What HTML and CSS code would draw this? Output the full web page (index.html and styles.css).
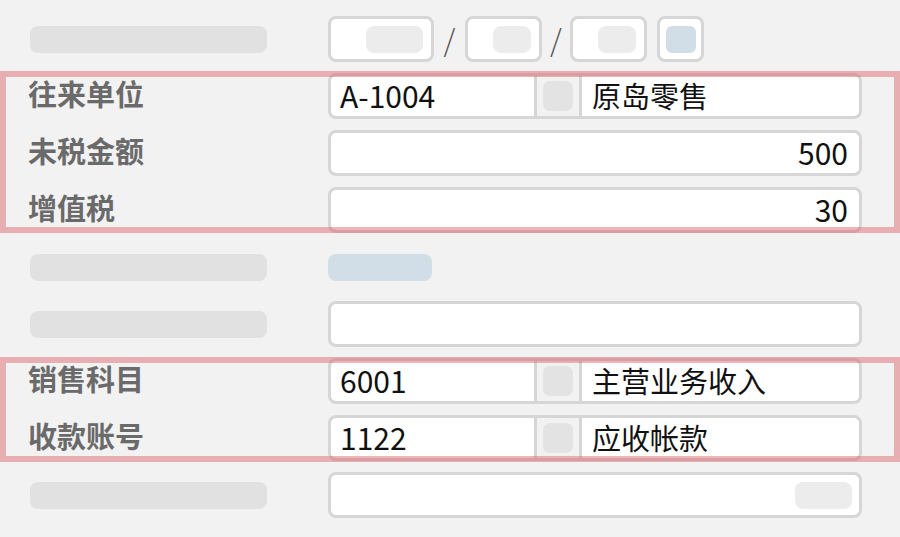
FILE: index.html
```html
<!DOCTYPE html>
<html>
<head>
  <title>凭证录入</title>
  <link rel="stylesheet" href="styles.css">
</head>
<body>

  <div class="form">
    <div class="row">
      <div class="label"><span class="skel"></span></div>
      <div class="date">
        <div class="box box-y"><span class="pill"></span></div>
        <span class="slash">/</span>
        <div class="box box-m"><span class="pill"></span></div>
        <span class="slash">/</span>
        <div class="box box-d"><span class="pill"></span></div>
        <div class="box box-pick"><span class="pick"></span></div>
      </div>
    </div>

    <div class="row">
      <div class="label">往来单位</div>
      <div class="field combo">
        <div class="code">A-1004</div>
        <div class="btn"><span class="sq"></span></div>
        <div class="name">原岛零售</div>
      </div>
    </div>

    <div class="row">
      <div class="label">未税金额</div>
      <div class="field num">500</div>
    </div>

    <div class="row">
      <div class="label">增值税</div>
      <div class="field num">30</div>
    </div>

    <div class="row">
      <div class="label"><span class="skel"></span></div>
      <div class="ctl"><span class="tag"></span></div>
    </div>

    <div class="row">
      <div class="label"><span class="skel"></span></div>
      <div class="field"></div>
    </div>

    <div class="row">
      <div class="label">销售科目</div>
      <div class="field combo">
        <div class="code">6001</div>
        <div class="btn"><span class="sq"></span></div>
        <div class="name">主营业务收入</div>
      </div>
    </div>

    <div class="row">
      <div class="label">收款账号</div>
      <div class="field combo">
        <div class="code">1122</div>
        <div class="btn"><span class="sq"></span></div>
        <div class="name">应收帐款</div>
      </div>
    </div>

    <div class="row">
      <div class="label"><span class="skel"></span></div>
      <div class="field end"><span class="pill"></span></div>
    </div>

    <!-- highlight overlays -->
    <div class="mark mark-a"></div>
    <div class="mark mark-b"></div>
  </div>

</body>
</html>
```

FILE: styles.css
```css
body {
  margin: 0;
  background: #f2f2f2;
  font-family: "Noto Sans CJK SC", "Noto Sans", sans-serif;
}

.form {
  position: relative;
  width: 900px;
  height: 537px;
  padding-top: 16px;
  box-sizing: border-box;
  display: flex;
  flex-direction: column;
  gap: 11px;
}

.row {
  display: flex;
  align-items: center;
  height: 46px;
}

.label {
  flex: none;
  width: 328px;
  padding-left: 28px;
  padding-bottom: 6px;
  box-sizing: border-box;
  font-size: 29px;
  font-weight: 700;
  color: #6a6a6a;
  line-height: 1;
}

.skel {
  display: block;
  width: 237px;
  height: 27px;
  margin-left: 2px;
  margin-top: 6px;
  border-radius: 8px;
  background: #e1e1e1;
}

.field {
  flex: none;
  width: 534px;
  height: 46px;
  box-sizing: border-box;
  border: 3px solid #d6d6d6;
  border-radius: 8px;
  background: #fff;
  font-size: 30px;
  line-height: 1;
  color: #111;
  display: flex;
  align-items: center;
  padding-bottom: 2px;
}

.num {
  justify-content: flex-end;
  padding-right: 11px;
}

.end {
  justify-content: flex-end;
  padding-right: 7px;
  padding-bottom: 0;
}

.combo {
  padding-bottom: 0;
}

.combo .code {
  flex: none;
  width: 206px;
  height: 100%;
  padding-left: 9px;
  padding-bottom: 2px;
  box-sizing: border-box;
  border-right: 3px solid #d6d6d6;
  display: flex;
  align-items: center;
}

.combo .btn {
  flex: none;
  width: 45px;
  height: 100%;
  box-sizing: border-box;
  border-right: 3px solid #d6d6d6;
  background: #f2f2f2;
  display: flex;
  align-items: center;
  justify-content: center;
}

.sq {
  width: 30px;
  height: 30px;
  border-radius: 7px;
  background: #e3e3e3;
}

.combo .name {
  flex: 1;
  padding-left: 10px;
  padding-bottom: 2px;
  font-size: 29px;
}

.date {
  display: flex;
  align-items: center;
}

.box {
  flex: none;
  height: 46px;
  box-sizing: border-box;
  border: 3px solid #d6d6d6;
  border-radius: 8px;
  background: #fff;
  display: flex;
  align-items: center;
  justify-content: flex-end;
  padding-right: 8px;
}

.box-y { width: 106px; }
.box-m { width: 77px; }
.box-d { width: 77px; }
.box-pick {
  width: 47px;
  margin-left: 10px;
  justify-content: center;
  padding-right: 0;
}

.pill {
  display: block;
  width: 57px;
  height: 27px;
  border-radius: 8px;
  background: #ececec;
}

.box-m .pill,
.box-d .pill { width: 38px; }

.pick {
  width: 30px;
  height: 27px;
  border-radius: 6px;
  background: #d1dee7;
}

.slash {
  width: 31px;
  text-align: center;
  font-size: 30px;
  font-weight: 300;
  color: #555;
  line-height: 1;
}

.box-m + .slash { width: 28px; }

.tag {
  display: block;
  width: 104px;
  height: 27px;
  border-radius: 8px;
  background: #d1dee7;
}

.mark {
  position: absolute;
  left: 0;
  width: 900px;
  box-sizing: border-box;
  border: 6px solid rgba(220, 93, 102, 0.45);
  pointer-events: none;
}

.mark-a { top: 71px; height: 162px; }
.mark-b { top: 357px; height: 105px; }
```
